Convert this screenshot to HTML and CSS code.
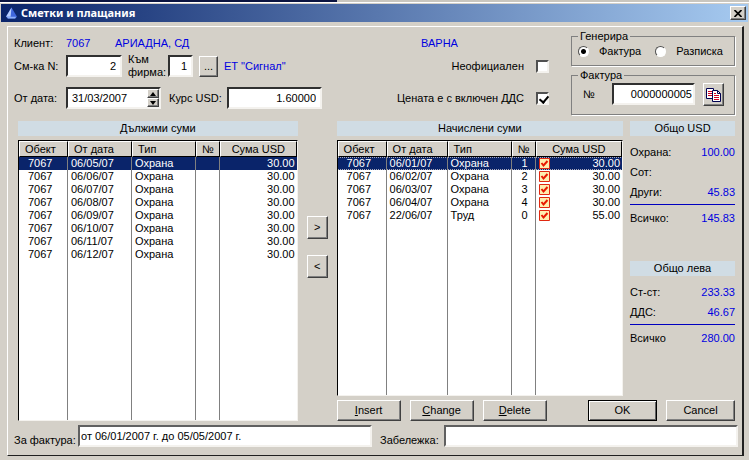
FILE: index.html
```html
<!DOCTYPE html>
<html lang="bg">
<head>
<meta charset="utf-8">
<title>Сметки и плащания</title>
<link rel="stylesheet" href="styles.css">
</head>
<body>
<div class="backdrop"></div>
<main class="window">
  <header class="titlebar">
    <svg class="app-icon" viewBox="0 0 12 12" aria-hidden="true"><path d="M6 0 0 10 2 12h8l2-2z" fill="#3f66dc"/><path d="M6 0 0 10h5z" fill="#b9d0ff"/><path d="M1 10h10l-1 2H2z" fill="#8fb0f8"/></svg>
    <h1>Сметки и плащания</h1>
    <button class="btn close" aria-label="Затвори"><svg viewBox="0 0 8 7" aria-hidden="true"><path d="M.5 0 7.500 7M7.500 0 .5 7" stroke="#000" stroke-width="1.700"/></svg></button>
  </header>
  <form class="panel">
    <section class="top">
      <div class="fields">
        <div class="row client"><span class="lead">Клиент:</span><span class="blue code">7067</span><span class="blue name">АРИАДНА, СД</span><span class="blue city">ВАРНА</span></div>
        <div class="row">
          <label class="lead" for="bill">См-ка N:</label><input class="box num bill" id="bill" value="2">
          <label class="two" for="firm">Към<br>фирма:</label><input class="box num firm" id="firm" value="1">
          <button type="button" class="btn dots">...</button><span class="blue">ЕТ "Сигнал"</span>
          <label class="tick">Неофициален<input type="checkbox"></label>
        </div>
        <div class="row">
          <label class="lead" for="date">От дата:</label>
          <span class="box date"><input id="date" value="31/03/2007"><span class="spin"><button type="button" class="btn" aria-label="Нагоре"><svg viewBox="0 0 6 4"><path d="M3 0 6 4H0z"/></svg></button><button type="button" class="btn" aria-label="Надолу"><svg viewBox="0 0 6 4"><path d="M0 0h6L3 4z"/></svg></button></span></span>
          <label class="rate-label" for="rate">Курс USD:</label><input class="box num rate" id="rate" value="1.60000">
          <label class="tick">Цената е с включен ДДС<input type="checkbox" checked></label>
        </div>
      </div>
      <div class="groups">
        <fieldset><legend>Генерира</legend>
          <div class="radios"><label><input type="radio" name="kind" checked>Фактура</label><label><input type="radio" name="kind">Разписка</label></div>
        </fieldset>
        <fieldset><legend>Фактура</legend>
          <div class="invoice"><label for="no">№</label><input class="box num" id="no" value="0000000005">
          <button type="button" class="btn copy" aria-label="Копирай"><svg viewBox="0 0 15 14" aria-hidden="true"><path d="M.5.5h7v10h-7z" fill="#fff" stroke="#000050"/><path d="M2 3.500h4M2 5.500h4M2 7.500h4" stroke="#d00020"/><path d="M6.500 2.500h5l3 3v8h-8z" fill="#fff" stroke="#000050"/><path d="M11.500 2.500v3h3" fill="none" stroke="#000050"/><path d="M8 5.500h2M8 7.500h5M8 9.500h5M8 11.500h5" stroke="#d00020"/></svg></button></div>
        </fieldset>
      </div>
    </section>

    <section class="middle">
      <div class="due">
        <h2>Дължими суми</h2>
        <div class="list">
          <table>
            <colgroup><col class="c-obj"><col class="c-date"><col class="c-type"><col class="c-no"><col></colgroup>
            <thead><tr><th>Обект</th><th>От дата</th><th>Тип</th><th class="mid">№</th><th class="mid">Сума USD</th></tr></thead>
            <tbody>
              <tr class="sel"><td>7067</td><td>06/05/07</td><td>Охрана</td><td></td><td>30.00</td></tr>
              <tr><td>7067</td><td>06/06/07</td><td>Охрана</td><td></td><td>30.00</td></tr>
              <tr><td>7067</td><td>06/07/07</td><td>Охрана</td><td></td><td>30.00</td></tr>
              <tr><td>7067</td><td>06/08/07</td><td>Охрана</td><td></td><td>30.00</td></tr>
              <tr><td>7067</td><td>06/09/07</td><td>Охрана</td><td></td><td>30.00</td></tr>
              <tr><td>7067</td><td>06/10/07</td><td>Охрана</td><td></td><td>30.00</td></tr>
              <tr><td>7067</td><td>06/11/07</td><td>Охрана</td><td></td><td>30.00</td></tr>
              <tr><td>7067</td><td>06/12/07</td><td>Охрана</td><td></td><td>30.00</td></tr>
              <tr class="rest"><td></td><td></td><td></td><td></td><td></td></tr>
            </tbody>
          </table>
        </div>
      </div>
      <div class="arrows"><button type="button" class="btn">&gt;</button><button type="button" class="btn">&lt;</button></div>
      <div class="right">
        <div class="right-main">
          <div class="charged">
            <h2>Начислени суми</h2>
            <div class="list">
              <table>
                <colgroup><col class="c-obj"><col class="c-date2"><col class="c-type"><col class="c-no"><col class="c-mark"><col></colgroup>
                <thead><tr><th>Обект</th><th>От дата</th><th>Тип</th><th class="mid">№</th><th class="mid" colspan="2">Сума USD</th></tr></thead>
                <tbody>
                  <tr class="sel focus"><td>7067</td><td>06/01/07</td><td>Охрана</td><td>1</td><td class="mark"><svg viewBox="0 0 11 11"><use href="#chk"/></svg></td><td>30.00</td></tr>
                  <tr><td>7067</td><td>06/02/07</td><td>Охрана</td><td>2</td><td class="mark"><svg viewBox="0 0 11 11"><use href="#chk"/></svg></td><td>30.00</td></tr>
                  <tr><td>7067</td><td>06/03/07</td><td>Охрана</td><td>3</td><td class="mark"><svg viewBox="0 0 11 11"><use href="#chk"/></svg></td><td>30.00</td></tr>
                  <tr><td>7067</td><td>06/04/07</td><td>Охрана</td><td>4</td><td class="mark"><svg viewBox="0 0 11 11"><use href="#chk"/></svg></td><td>30.00</td></tr>
                  <tr><td>7067</td><td>22/06/07</td><td>Труд</td><td>0</td><td class="mark"><svg viewBox="0 0 11 11"><use href="#chk"/></svg></td><td>55.00</td></tr>
                  <tr class="rest"><td></td><td></td><td></td><td></td><td class="mark"></td><td></td></tr>
                </tbody>
              </table>
            </div>
          </div>
          <aside class="totals">
            <h2>Общо USD</h2>
            <dl>
              <div><dt>Охрана:</dt><dd>100.00</dd></div>
              <div><dt>Сот:</dt><dd></dd></div>
              <div><dt>Други:</dt><dd>45.83</dd></div>
              <div class="sum"><dt>Всичко:</dt><dd>145.83</dd></div>
            </dl>
            <h2>Общо лева</h2>
            <dl>
              <div><dt>Ст-ст:</dt><dd>233.33</dd></div>
              <div><dt>ДДС:</dt><dd>46.67</dd></div>
              <div class="sum"><dt>Всичко</dt><dd>280.00</dd></div>
            </dl>
          </aside>
        </div>
        <div class="actions">
          <button type="button" class="btn"><u>I</u>nsert</button><button type="button" class="btn"><u>C</u>hange</button><button type="button" class="btn"><u>D</u>elete</button>
          <button type="button" class="btn wide ok">OK</button><button type="button" class="btn wide">Cancel</button>
        </div>
      </div>
    </section>

    <section class="notes">
      <label for="for">За фактура:</label><input class="box soft" id="for" value="от 06/01/2007 г. до 05/05/2007 г.">
      <label for="note">Забележка:</label><input class="box soft" id="note">
    </section>
  </form>
</main>
<svg class="defs" aria-hidden="true"><symbol id="chk" viewBox="0 0 11 11"><path d="M.5.5h10v10H.5z" fill="#ffeeb0" stroke="#e02810"/><path d="M2.500 5 4.500 7.500 8.500 3" fill="none" stroke="#e81800" stroke-width="2"/></symbol></svg>
</body>
</html>
```
FILE: styles.css
```css
* { box-sizing: border-box; }
body {
  margin: 0;
  min-height: 100vh;
  display: flex;
  flex-direction: column;
  background: #d4d0c8;
  color: #000;
  font: 11px/13px "Liberation Sans", Arial, sans-serif;
}
input, button { font: inherit; color: inherit; margin: 0; padding: 0; min-width: 0; }
h1, h2, dl, dd { margin: 0; }
.defs { position: absolute; width: 0; height: 0; }
.backdrop { height: 2px; background: linear-gradient(90deg, #0b1440 45%, #c9c6bf 45%); }
.window { flex: 1; display: flex; flex-direction: column; border-top: 1px solid #fff; padding: 1px 1px 4px; }
.titlebar {
  display: flex;
  align-items: center;
  height: 18px;
  padding: 0 2px 0 5px;
  background: linear-gradient(90deg, #0a246a, #a6caf0);
}
.titlebar h1 { flex: 1; margin-left: 4px; color: #fff; font: bold 11px/16px "Noto Sans", sans-serif; }
.app-icon { width: 11px; height: 12px; }
.btn {
  display: flex;
  align-items: center;
  justify-content: center;
  background: #d4d0c8;
  border: 1px solid;
  border-color: #fff #404040 #404040 #fff;
  box-shadow: inset -1px -1px #808080;
  border-radius: 0;
}
.close { width: 16px; height: 14px; }
.close svg { width: 8px; height: 7px; }
.panel {
  flex: 1;
  display: flex;
  flex-direction: column;
  margin: 4px 4px 0 6px;
  padding: 0 4px 8px 6px;
  border: 1px solid;
  border-color: #fff #202020 #202020 #fff;
  border-right-width: 2px;
}
.blue { color: #0000e0; }
.top { display: flex; gap: 22px; padding: 9px 3px 0 0; }
.fields { flex: 1; display: flex; flex-direction: column; }
.row { display: flex; align-items: center; height: 32px; white-space: nowrap; }
.row.client { height: 14px; }
.lead { width: 52px; }
.code { width: 49px; }
.name { flex: 1; }
.city { width: 128px; }
.box {
  height: 22px;
  padding: 0 4px;
  background: #fff;
  border: 2px solid;
  border-color: #303030 #f4f2ee #f4f2ee #303030;
  border-radius: 0;
}
.soft { border-color: #606060 #f4f2ee #f4f2ee #606060; padding: 0 1px; }
.num { text-align: right; }
.bill { width: 56px; }
.two { margin: 0 0 0 6px; width: 40px; }
.firm { width: 25px; }
.dots { width: 19px; height: 21px; margin: 0 6px; }
.tick { display: flex; align-items: center; gap: 12px; margin-left: auto; }
.tick input {
  appearance: none;
  width: 13px;
  height: 13px;
  background: #fff;
  border: 2px solid;
  border-color: #505050 #f4f2ee #f4f2ee #505050;
}
.tick input:checked::after {
  content: "";
  display: block;
  width: 4px;
  height: 7px;
  margin: 0 0 0 3px;
  border: solid #000;
  border-width: 0 2px 2px 0;
  transform: rotate(40deg);
}
.date { display: flex; width: 95px; padding: 0 0 0 4px; }
.date input { flex: 1; border: 0; background: none; }
.spin { display: flex; flex-direction: column; width: 12px; }
.spin .btn { flex: 1; }
.spin svg { width: 6px; height: 4px; }
.rate-label { margin-left: 8px; width: 58px; }
.rate { width: 95px; }
.groups { width: 164px; margin-top: -6px; }
fieldset {
  margin: 0;
  padding: 0 6px;
  min-width: 0;
  border: 1px solid #808080;
  box-shadow: 1px 1px #fff;
  height: 36px;
}
legend { padding: 0 2px; height: 13px; }
fieldset + fieldset { height: 46px; margin-top: 3px; }
.radios { display: flex; gap: 14px; margin-top: 2px; }
.radios label { display: flex; align-items: center; gap: 10px; }
.radios input {
  appearance: none;
  width: 11px;
  height: 11px;
  border-radius: 50%;
  border: 1px solid;
  border-color: #505050 #fff #fff #505050;
  background: #fff;
}
.radios input:checked { background: radial-gradient(circle, #000 2px, #fff 3px); }
.invoice { display: flex; align-items: center; }
.invoice label { width: 34px; padding-left: 5px; }
.invoice .num { flex: 1; padding: 0 1px; }
.copy { width: 21px; height: 23px; margin: 1px 4px 0 8px; }
.copy svg { flex: none; width: 15px; height: 14px; }

h2 { height: 15px; background: #d0dce4; text-align: center; font: inherit; line-height: 15px; }
.middle { flex: 1; display: flex; padding: 6px 3px 0 4px; }
.due { flex: 280; display: flex; flex-direction: column; }
.arrows { width: 39px; padding: 95px 9px 0; display: flex; flex-direction: column; gap: 16px; }
.arrows .btn { height: 23px; }
.right { flex: 399; display: flex; flex-direction: column; }
.right-main { flex: 1; display: flex; gap: 7px; }
.charged { flex: 1; display: flex; flex-direction: column; }
.list {
  flex: 1;
  display: flex;
  margin-top: 4px;
  background: #fff;
  border: 1px solid;
  border-color: #000 #f4f2ee #f4f2ee #000;
}
table { width: 100%; border-spacing: 0; table-layout: fixed; }
.c-obj { width: 49px; }
.c-date { width: 64px; }
.c-date2 { width: 61px; }
.c-type { width: 64px; }
.c-no { width: 24px; }
.c-mark { width: 16px; }
th {
  height: 16px;
  padding: 0 5px;
  text-align: left;
  font-weight: normal;
  line-height: 13px;
  background: #d4d0c8;
  border: 1px solid;
  border-color: #fff #000 #000 #fff;
  white-space: nowrap;
}
th.mid { text-align: center; padding: 0; }
td { height: 13px; padding: 0 0 0 3px; line-height: 13px; border-right: 1px solid #808080; }
td:first-child { padding-left: 9px; }
td:nth-child(4) { text-align: right; padding: 0 7px 0 0; }
td:last-child { text-align: right; border: 0; padding: 0 2px 0 0; }
td.mark { border: 0; padding: 0 0 0 3px; }
td svg { display: block; width: 11px; height: 11px; }
.sel td { background: #0a246a; color: #fff; }
.focus td { background: linear-gradient(90deg, #aab 50%, #0a246a 50%) 0 0 / 2px 1px repeat-x, linear-gradient(90deg, #aab 50%, #0a246a 50%) 0 100% / 2px 1px repeat-x, #0a246a; }
.rest td { height: auto; }
.totals { width: 105px; display: flex; flex-direction: column; }
.totals dl { padding-top: 6px; margin-bottom: 29px; }
.totals dl div { display: flex; justify-content: space-between; height: 20px; align-items: center; }
.totals dd { color: #0000e0; }
.totals dl .sum { border-top: 1px solid #0000c0; height: 28px; margin-top: 2px; }
.actions { display: flex; gap: 9px; padding-top: 4px; }
.actions .btn { width: 64px; height: 21px; }
.actions .wide { width: 69px; }
.actions .ok { margin-left: auto; border-color: #000; box-shadow: inset 1px 1px #fff, inset -1px -1px #606060; }
.notes { display: flex; align-items: center; padding-top: 4px; }
.notes label { width: 64px; flex: none; padding-top: 8px; white-space: nowrap; }
.notes .box { flex: 1; }
.notes .box + label { margin-left: 8px; }
```
